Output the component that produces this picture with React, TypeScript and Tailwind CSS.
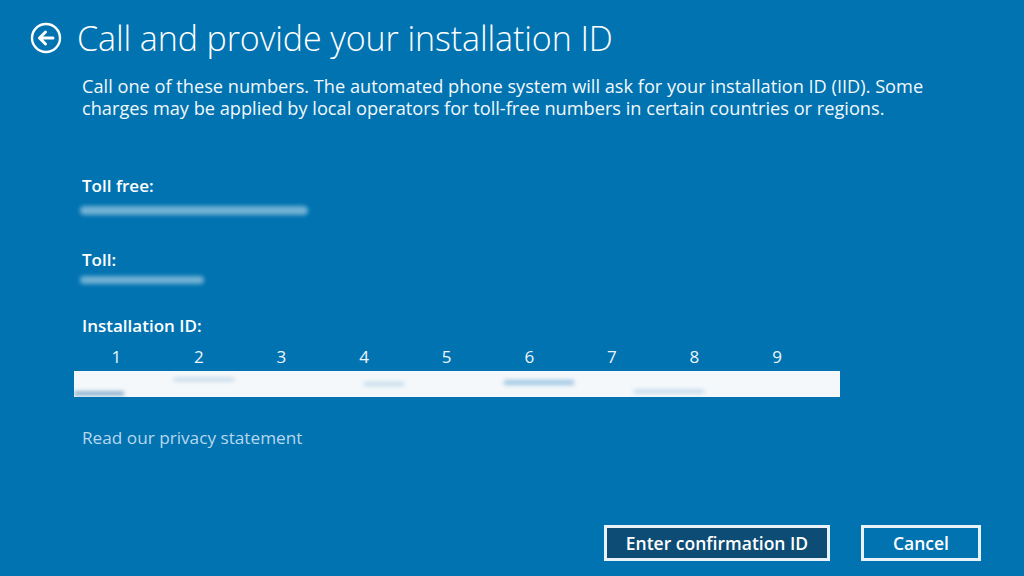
export default function App() {
  const columns = ["1", "2", "3", "4", "5", "6", "7", "8", "9"];

  return (
    <div className="w-[1024px] h-[576px] bg-[#0173b1] text-white overflow-hidden flex flex-col font-['Open_Sans','Noto_Sans',sans-serif]">
      {/* header */}
      <div className="flex items-center pt-[20px] pl-[30px] gap-[15px]">
        <svg width="32" height="32" viewBox="0 0 32 32" fill="none" stroke="white" strokeWidth="2.4">
          <circle cx="16" cy="16" r="14" />
          <path d="M23 16H9.5M15.5 10l-6 6 6 6" strokeLinecap="round" strokeLinejoin="round" strokeWidth="3" />
        </svg>
        <h1 className="text-[34px] font-light leading-[36px] tracking-[-0.1px] whitespace-nowrap">
          Call and provide your installation ID
        </h1>
      </div>

      <div className="pl-[82px] mt-[19px]">
        <p className="text-[18.2px] leading-[22px] text-[#f2f8fc] whitespace-nowrap">
          Call one of these numbers. The automated phone system will ask for your installation ID (IID). Some
          <br />
          charges may be applied by local operators for toll-free numbers in certain countries or regions.
        </p>

        {/* toll free */}
        <div className="mt-[57px] flex flex-col">
          <span className="text-[17px] font-semibold leading-[20px]">Toll free:</span>
          <div className="mt-[10px] ml-[-2px] h-[9px] w-[228px] rounded-full bg-white/45 blur-[2px]" />
        </div>

        <div className="mt-[35px] flex flex-col">
          <span className="text-[17px] font-semibold leading-[20px]">Toll:</span>
          <div className="mt-[6px] ml-[-2px] h-[8px] w-[124px] rounded-full bg-white/45 blur-[2px]" />
        </div>

        <div className="mt-[32px] flex flex-col">
          <span className="text-[17px] font-semibold leading-[20px]">Installation ID:</span>
          <div className="mt-[11px] ml-[-8px] w-[766px] flex pl-[1px]">
            {columns.map((c) => (
              <span key={c} className="w-[82.6px] text-center text-[17px] leading-[20px] text-[#eef6fb]">
                {c}
              </span>
            ))}
          </div>
          <div className="mt-[4px] ml-[-8px] w-[766px] h-[26px] bg-[#f4f8fb] flex items-center overflow-hidden">
            <div className="h-[3px] w-[50px] mt-[18px] bg-[#5a8fb8] blur-[2px]" />
            <div className="h-[3px] w-[60px] ml-[50px] mb-[10px] bg-[#b9d3e6] blur-[2px]" />
            <div className="h-[4px] w-[40px] ml-[130px] bg-[#c3d9ea] blur-[2px]" />
            <div className="h-[5px] w-[70px] ml-[100px] mb-[4px] bg-[#9fc6e2] blur-[2px]" />
            <div className="h-[3px] w-[70px] ml-[60px] mt-[14px] bg-[#b6d0e4] blur-[2px]" />
          </div>
        </div>

        <a className="block mt-[31px] text-[17.2px] leading-[20px] text-[#b7d8ee] w-fit">Read our privacy statement</a>
      </div>

      {/* buttons */}
      <div className="mt-auto mb-[15px] flex justify-end gap-[31px] pr-[43px]">
        <button className="w-[226px] h-[36px] border-[3px] border-[#e8f2f8] bg-[#0d4d75] text-[17.5px] font-semibold">
          Enter confirmation ID
        </button>
        <button className="w-[120px] h-[36px] border-[3px] border-[#e8f2f8] bg-[#0173b1] text-[17.5px] font-semibold">
          Cancel
        </button>
      </div>
    </div>
  );
}
